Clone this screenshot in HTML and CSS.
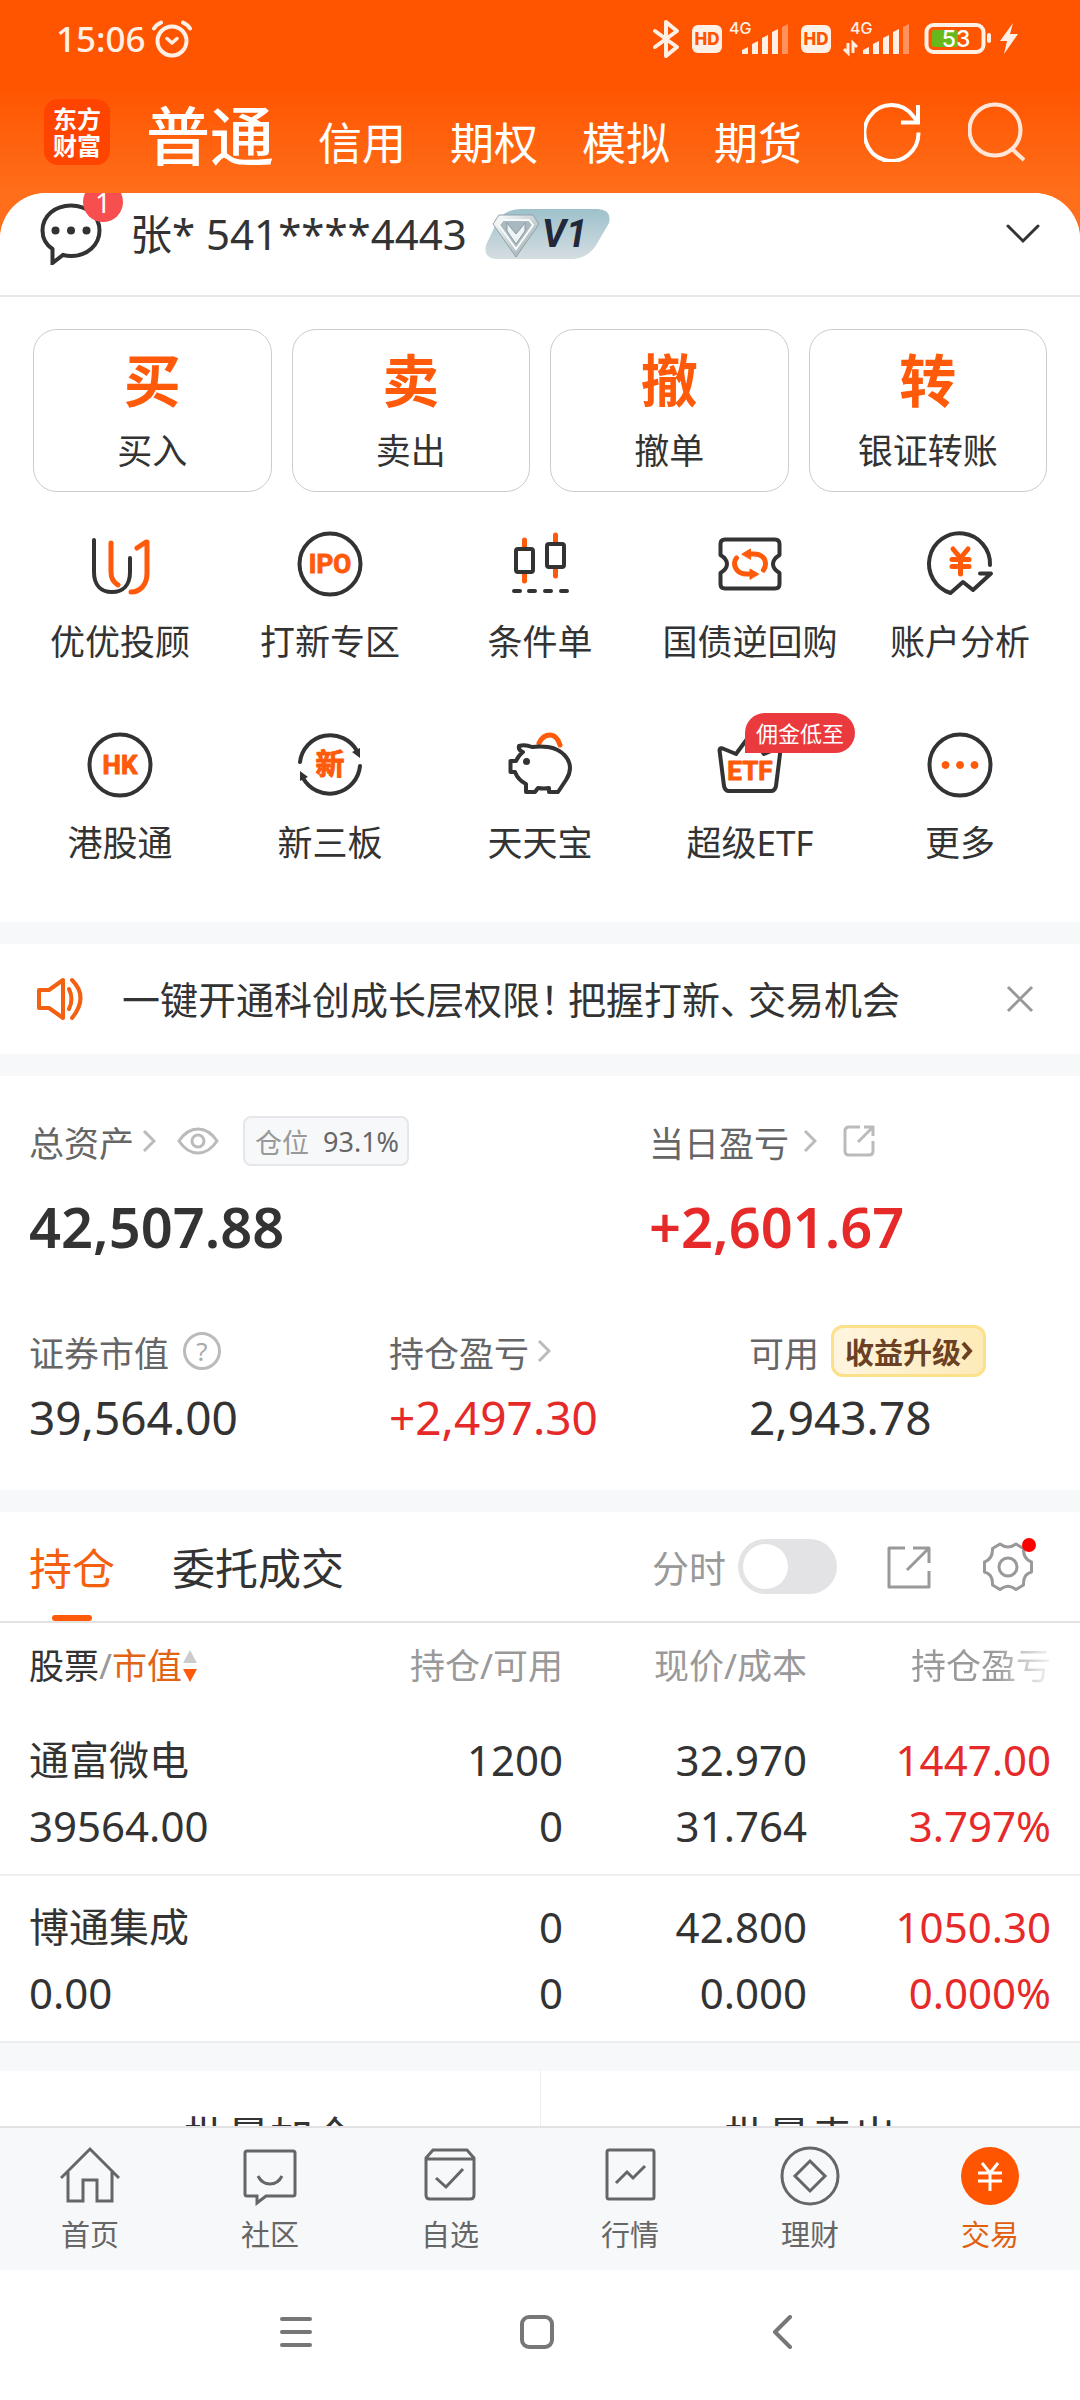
FILE: index.html
```html
<!DOCTYPE html>
<html lang="zh-CN">
<head>
<meta charset="utf-8">
<meta name="viewport" content="width=device-width, initial-scale=1">
<title>交易</title>
<link rel="stylesheet" href="styles.css">
</head>
<body>
<div class="app">
  <header class="top">
    <div class="status">
      <div class="status-left">
        <span class="clock">15:06</span>
        <svg width="40" height="38" viewBox="0 0 40 38" fill="none" stroke="#fff0e6" stroke-width="4" stroke-linecap="round"><circle cx="20" cy="21" r="14.500"/><path d="M2 8.500Q4 5 9 2.500M31 2.500Q36 5 38 8.500"/><path d="M15 18.500L20 23L25 18.500" stroke-linejoin="round" stroke-width="3.500"/></svg>
      </div>
      <svg class="status-right" width="366" height="40" viewBox="0 0 366 40">
        <path d="M3 12L25 28L14 37V3L25 12L3 28" fill="none" stroke="#fff0e6" stroke-width="4" stroke-linejoin="round" stroke-linecap="round"/>
        <rect x="40" y="6" width="30" height="28" rx="6" fill="#fff0e6"/><text class="hd" x="55" y="26" text-anchor="middle">HD</text>
        <text class="net" x="77" y="15">4G</text>
        <g fill="#fff0e6"><path d="M90 35V31L96 28V35ZM100 35V25L106 22V35ZM110 35V19L116 16V35ZM120 35V13L126 10V35Z"/><path d="M130 35V8L136 5V35Z" opacity=".4"/></g>
        <rect x="149" y="6" width="30" height="28" rx="6" fill="#fff0e6"/><text class="hd" x="164" y="26" text-anchor="middle">HD</text>
        <text class="net" x="198" y="15">4G</text>
        <path d="M196 24V34L192 30M201 34V24L205 28" fill="none" stroke="#fff0e6" stroke-width="3"/>
        <g fill="#fff0e6"><path d="M211 35V31L217 28V35ZM221 35V25L227 22V35ZM231 35V19L237 16V35ZM241 35V13L247 10V35Z"/><path d="M251 35V8L257 5V35Z" opacity=".4"/></g>
        <rect x="274.500" y="6" width="57" height="27" rx="7" fill="none" stroke="#fff0e6" stroke-width="4"/>
        <rect x="280" y="11" width="26" height="17" rx="2" fill="#67b81c"/><rect x="335" y="14" width="4" height="10" rx="2" fill="#fff0e6"/>
        <text class="batt" x="304" y="28" text-anchor="middle">53</text>
        <path d="M361 4L348 22H355L352 35L366 15H358Z" fill="#fff0e6"/>
      </svg>
    </div>
    <nav class="modes">
      <a class="logo" href="#">东方<br>财富</a>
      <div class="mode-list">
        <a class="mode mode-on" href="#">普通</a>
        <a class="mode" href="#">信用</a>
        <a class="mode" href="#">期权</a>
        <a class="mode" href="#">模拟</a>
        <a class="mode" href="#">期货</a>
      </div>
      <div class="tools">
        <button class="icon-btn" aria-label="刷新"><svg width="58" height="60" viewBox="0 0 58 60" fill="none" stroke="#fff" stroke-width="4"><path d="M54.500 30.500A27 28 0 1 1 49 14L54 20"/><path d="M54 3V20.500H37"/></svg></button>
        <button class="icon-btn" aria-label="搜索"><svg width="58" height="60" viewBox="0 0 58 60" fill="none" stroke="#ffe6d8" stroke-width="4"><circle cx="27" cy="28" r="25.500"/><path d="M43 46L56 58"/></svg></button>
      </div>
    </nav>
  </header>

  <main class="sheet">
    <section class="account">
      <button class="icon-btn msg" aria-label="消息">
        <svg width="62" height="62" viewBox="0 0 62 62"><path d="M31 2.500C47 2.500 59.500 13 59.500 27.500S47 53 31 53Q27 53 23 52L12.500 60V46C5 41 2.500 34 2.500 27.500C2.500 13 15 2.500 31 2.500Z" fill="none" stroke="#333" stroke-width="4"/><circle cx="15.500" cy="27.500" r="4" fill="#333"/><circle cx="31" cy="27.500" r="4" fill="#333"/><circle cx="46.500" cy="27.500" r="4" fill="#333"/></svg>
        <span class="badge">1</span>
      </button>
      <span class="acct-name">张* 541****4443</span>
      <svg class="level" width="126" height="50" viewBox="0 0 126 50">
        <defs><linearGradient id="lv" x1="0" y1="0" x2="0" y2="1"><stop offset="0" stop-color="#9dc1cb"/><stop offset="1" stop-color="#d5dde1"/></linearGradient><linearGradient id="gem" x1="0" y1="0" x2="1" y2="1"><stop offset="0" stop-color="#fff"/><stop offset="1" stop-color="#94a5ab"/></linearGradient></defs>
        <path d="M36 0H113Q127 1 124 14L113 33Q104 50 86 50H11Q-2 49 1 36L10 17Q17 0 36 0Z" fill="url(#lv)"/>
        <path d="M14 6H48L54 15L31 48L8 15Z" fill="url(#gem)" stroke="#8fa1a7" stroke-width="1"/><path d="M18 11H44L48 16L31 40L14 16Z" fill="#aab9bf" stroke="#f6fafb" stroke-width="2"/><path d="M22 14L31 25L40 14V22L31 35L22 22Z" fill="#eef3f5" stroke="#8c9ba0" stroke-width="1"/>
        <text x="57" y="38">V1</text>
      </svg>
      <button class="icon-btn expand" aria-label="展开"><svg width="34" height="20" viewBox="0 0 34 20" fill="none" stroke="#333" stroke-width="3" stroke-linecap="round"><path d="M2 2L17 17L32 2"/></svg></button>
    </section>

    <section class="cards">
      <button class="card"><b>买</b><span>买入</span></button>
      <button class="card"><b>卖</b><span>卖出</span></button>
      <button class="card"><b>撤</b><span>撤单</span></button>
      <button class="card"><b>转</b><span>银证转账</span></button>
    </section>

    <section class="grid">
      <a class="cell" href="#"><span class="ico"><svg viewBox="0 0 64 64"><path d="M6 8V40C6 53 13 60 24 60S42 53 42 40V26"/><path class="o" d="M23 11V40Q23 49 30 53M49 16L58 10H59V41C59 53 52 60 43 60"/></svg></span>优优投顾</a>
      <a class="cell" href="#"><span class="ico"><svg viewBox="0 0 64 64"><circle cx="32" cy="32" r="30.500"/><text class="t" x="32" y="41">IPO</text></svg></span>打新专区</a>
      <a class="cell" href="#"><span class="ico"><svg viewBox="0 0 64 64"><path class="o" d="M16.500 8V16M16.500 41V49M47.500 3V11M47.500 36V44"/><rect x="8" y="17" width="17" height="23" rx="2"/><rect x="39" y="12" width="17" height="23" rx="2"/><path d="M6 59H12M21 59H27M37 59H43M53 59H59"/></svg></span>条件单</a>
      <a class="cell" href="#"><span class="ico"><svg viewBox="0 0 64 64"><path d="M7 7.500H57Q61.500 7.500 61.500 12V23Q55 27 55 32T61.500 41V52Q61.500 56.500 57 56.500H7Q2.500 56.500 2.500 52V41Q9 37 9 32T2.500 23V12Q2.500 7.500 7 7.500Z"/><path class="o" d="M31 22H36C44 22 47.500 27 47.500 32Q47.500 35 45.500 38M33 42H28C20 42 16.500 36 16.500 31Q16.500 28 18.500 26"/><path class="of" d="M24 22L32.500 17V27ZM40.500 42L32 37V47Z"/></svg></span>国债逆回购</a>
      <a class="cell" href="#"><span class="ico"><svg viewBox="0 0 64 64"><path d="M62 33A30.500 30.500 0 1 0 22.500 61L35 50L45 58L63 41.500H52"/><path class="o" d="M25 17L32.500 26L40 17M32.500 26V42M24 27.500H41M24 34.500H41"/></svg></span>账户分析</a>
      <a class="cell" href="#"><span class="ico"><svg viewBox="0 0 64 64"><circle cx="32" cy="32" r="30.500"/><text class="t" x="32" y="41">HK</text></svg></span>港股通</a>
      <a class="cell" href="#"><span class="ico"><svg viewBox="0 0 64 64"><path d="M2 29A30.500 30.500 0 0 1 59 18M62 33A30.500 30.500 0 0 1 5 45"/><path class="df" d="M62 25L54 19L62 15ZM2 38L10 44L2 48Z"/><text class="t zh" x="32" y="42">新</text></svg></span>新三板</a>
      <a class="cell" href="#"><span class="ico"><svg viewBox="0 0 64 64"><path class="o" d="M31 10Q35 2 42 2T52 12"/><path d="M11 13Q17 11 24 14Q32 13 40 14C54 16 62 26 62 35Q62 41 58 47L50 59H41V55Q36 56 30 55L27 59H18V51Q10 47 7 39H2.500V28H8Q10 23 15 19Q10 17 11 13Z"/><circle class="df" cx="18.500" cy="28.500" r="3.500"/></svg></span>天天宝</a>
      <a class="cell" href="#"><span class="ico"><svg viewBox="0 0 64 64"><path d="M1.500 17Q2 14 6 16L18 21L32 2L46 21L58 16Q62 14 62.500 17L58 53Q57 58 53 58H11Q7 58 6 53Z"/><text class="t" x="32" y="47">ETF</text></svg><em class="tag">佣金低至</em></span>超级ETF</a>
      <a class="cell" href="#"><span class="ico"><svg viewBox="0 0 64 64"><circle cx="32" cy="32" r="30.500"/><path class="of" d="M14 32a3.500 3.500 0 1 0 7 0a3.500 3.500 0 1 0-7 0M28.500 32a3.500 3.500 0 1 0 7 0a3.500 3.500 0 1 0-7 0M43 32a3.500 3.500 0 1 0 7 0a3.500 3.500 0 1 0-7 0"/></svg></span>更多</a>
    </section>

    <section class="notice">
      <svg width="50" height="44" viewBox="0 0 50 44" fill="none" stroke="#f26112" stroke-width="4" stroke-linejoin="round"><path d="M3 13H13L27 3V41L13 31H3Z"/><path d="M33 12Q38 22 33 32M36 3Q53 20 36 41" stroke-linecap="round"/></svg>
      <p><span>一键开通科创成长层权限！</span><span>把握打新、</span><span>交易机会</span></p>
      <button class="icon-btn" aria-label="关闭"><svg width="28" height="28" viewBox="0 0 28 28" stroke="#999" stroke-width="3"><path d="M2 2L26 26M26 2L2 26"/></svg></button>
    </section>

    <section class="assets">
      <div class="row-main">
        <div>
          <div class="label">总资产<svg class="chev" viewBox="0 0 14 22"><path d="M2 1L12 11L2 21"/></svg>
            <button class="icon-btn eye" aria-label="显示金额"><svg width="42" height="28" viewBox="0 0 42 28" fill="none" stroke="#bbb" stroke-width="3"><path d="M2 14Q10 2 21 2T40 14Q32 26 21 26T2 14Z"/><circle cx="21" cy="14" r="6"/></svg></button>
            <span class="pos"><span>仓位</span><span class="pct">93.1%</span></span></div>
          <div class="big">42,507.88</div>
        </div>
        <div>
          <div class="label">当日盈亏<svg class="chev wide" viewBox="0 0 14 22"><path d="M2 1L12 11L2 21"/></svg>
            <button class="icon-btn share" aria-label="分享盈亏"><svg width="32" height="32" viewBox="0 0 32 32" fill="none" stroke="#bbb" stroke-width="3"><path d="M17 2H6Q2 2 2 6V26Q2 30 6 30H26Q30 30 30 26V16M21 2H30V11M30 2L15 17"/></svg></button></div>
          <div class="big up">+2,601.67</div>
        </div>
      </div>
      <div class="row-sub">
        <div><div class="label">证券市值<button class="icon-btn help" aria-label="说明">?</button></div><div class="mid">39,564.00</div></div>
        <div><div class="label">持仓盈亏<svg class="chev" viewBox="0 0 14 22"><path d="M2 1L12 11L2 21"/></svg></div><div class="mid up">+2,497.30</div></div>
        <div><div class="label">可用<button class="upgrade">收益升级<svg width="12" height="20" viewBox="0 0 12 20" fill="none" stroke="#6b4023" stroke-width="4"><path d="M2 2L9 10L2 18"/></svg></button></div><div class="mid">2,943.78</div></div>
      </div>
    </section>

    <section class="holdings">
      <div class="tabs">
        <button class="tab tab-on">持仓</button>
        <button class="tab">委托成交</button>
        <label class="switch">分时<input type="checkbox"></label>
        <button class="icon-btn" aria-label="分享"><svg width="44" height="44" viewBox="0 0 44 44" fill="none" stroke="#999" stroke-width="3" stroke-linejoin="round"><path d="M18 3H2V42H42V26M26 3H42V18M42 3L20 25"/></svg></button>
        <button class="icon-btn gear" aria-label="设置"><svg width="50" height="50" viewBox="0 0 50 50" fill="none" stroke="#999" stroke-width="3" stroke-linejoin="round"><path d="M17 2Q25 8 33 2L40.500 6.500Q40 17 48.500 20V30Q40 32 40.500 43L33 47.500Q25 41 17 47.500L9.500 43Q10 32 1.500 30V20Q10 17 9.500 6.500Z"/><circle cx="25" cy="25" r="9"/></svg></button>
      </div>
      <table>
        <thead><tr>
          <th><span class="dark">股票</span>/<span class="hot">市值</span><svg class="sort" width="16" height="34" viewBox="0 0 16 34"><path d="M8 1L15 14H1Z" fill="#ccc"/><path d="M8 33L15 20H1Z" fill="#ff5a0a"/></svg></th>
          <th>持仓/可用</th><th>现价/成本</th><th><span class="fade">持仓盈亏</span></th>
        </tr></thead>
        <tbody>
          <tr><td><span class="name">通富微电</span><br>39564.00</td><td>1200<br>0</td><td>32.970<br>31.764</td><td class="up">1447.00<br>3.797%</td></tr>
          <tr><td><span class="name">博通集成</span><br>0.00</td><td>0<br>0</td><td>42.800<br>0.000</td><td class="up">1050.30<br>0.000%</td></tr>
        </tbody>
      </table>
    </section>

    <section class="batch">
      <button>批量加仓</button><button>批量卖出</button>
    </section>
  </main>

  <nav class="bottom">
    <a href="#"><svg viewBox="0 0 60 60"><path d="M1 32L30 3L59 32M8 26V55H23V34H37V55H52V26"/></svg>首页</a>
    <a href="#"><svg viewBox="0 0 60 60"><path d="M7 5H53Q55 5 55 7V48Q55 50 53 50H26L17 57V50H7Q5 50 5 48V7Q5 5 7 5Z"/><path d="M18 30Q22 38 30 38T42 30"/></svg>社区</a>
    <a href="#"><svg viewBox="0 0 60 60"><path d="M6 12L13 4H47L54 12V49Q54 53 50 53H10Q6 53 6 49ZM6 13H54M16 32L26 41L43 23"/></svg>自选</a>
    <a href="#"><svg viewBox="0 0 60 60"><rect x="7" y="4" width="47" height="49" rx="2"/><path d="M16 37L27 26L33 32L45 20"/></svg>行情</a>
    <a href="#"><svg viewBox="0 0 60 60"><circle cx="30" cy="30" r="28"/><path d="M30 15L45 30L30 45L15 30Z"/></svg>理财</a>
    <a class="on" href="#"><svg viewBox="0 0 60 60"><circle class="disc" cx="30" cy="30" r="29"/><path d="M22 17L30 27L38 17M30 27V45M18 27H42M18 35H42"/></svg>交易</a>
  </nav>
  <div class="sysnav">
    <button class="icon-btn" aria-label="最近任务"><svg width="32" height="32" viewBox="0 0 32 32"><path d="M2 3H30M2 16H30M2 29H30"/></svg></button>
    <button class="icon-btn" aria-label="主屏幕"><svg width="34" height="34" viewBox="0 0 34 34"><rect x="2" y="2" width="30" height="30" rx="7"/></svg></button>
    <button class="icon-btn" aria-label="返回"><svg width="20" height="34" viewBox="0 0 20 34"><path d="M18 2L3 17L18 32"/></svg></button>
  </div>
</div>
</body>
</html>
```
FILE: styles.css
```css
* { box-sizing: border-box; }

body {
  margin: 0;
  font-family: "Noto Sans", "Noto Sans CJK SC", sans-serif;
  color: #333;
  background: #fff;
}

a { color: inherit; text-decoration: none; }

button {
  margin: 0;
  padding: 0;
  border: 0;
  background: none;
  font: inherit;
  color: inherit;
}

svg { display: block; flex: none; }
p { margin: 0; }
.icon-btn { display: block; flex: none; position: relative; }
.up { color: #e62a2a; }

.app {
  display: flex;
  flex-direction: column;
  height: 100vh;
  background: linear-gradient(#ff5400 84px, #ff6e1a 192px, #ff6e1a 260px, #fff 260px);
}

/* Header */
.status {
  display: flex;
  justify-content: space-between;
  padding: 19px 62px 0 56px;
  height: 80px;
}
.status-left { display: flex; gap: 6px; height: 40px; align-items: center; }
.clock { font-size: 35px; line-height: 40px; font-weight: 500; color: #fff0e6; }
.status-right { font-family: Inter, sans-serif; }
.hd { font-size: 17px; font-weight: 800; fill: #ff5400; }
.net { font-size: 16px; font-weight: 500; fill: #fff0e6; }
.batt { font-size: 23px; font-weight: 500; fill: #fff; }

.modes { display: flex; align-items: center; height: 113px; padding: 0 54px 10px 44px; }
.logo {
  width: 66px;
  height: 66px;
  padding-top: 6px;
  border-radius: 14px;
  background: #ff4400;
  color: #fff;
  font-size: 24px;
  line-height: 27px;
  font-weight: 700;
  text-align: center;
}
.mode-list { display: flex; align-items: baseline; gap: 44px; margin-left: 36px; padding-top: 15px; color: #fff; }
.mode { font-size: 44px; line-height: 80px; }
.mode-on { font-size: 64px; font-weight: 500; }
.tools { display: flex; gap: 46px; margin-left: auto; }

/* Content sheet */
.sheet {
  flex: 1;
  min-height: 0;
  overflow: hidden;
  border-radius: 46px 46px 0 0;
  background: #fff;
}
.sheet > section { background: #fff; }

.account {
  display: flex;
  align-items: center;
  height: 104px;
  padding: 0 40px 20px;
  border-bottom: 2px solid #e8e8e8;
}
.badge {
  position: absolute;
  left: 43px;
  top: -21px;
  width: 40px;
  height: 40px;
  border-radius: 50%;
  background: #f74f50;
  color: #fff;
  font-size: 28px;
  line-height: 40px;
  text-align: center;
}
.acct-name { margin-left: 28px; font-size: 42px; line-height: 60px; }
.level { margin-left: 18px; }
.level text { font: italic 700 38px Roboto, sans-serif; fill: #22273a; }
.expand { margin-left: auto; }

.cards {
  display: grid;
  grid-template-columns: repeat(4, 1fr);
  gap: 20px;
  padding: 32px 33px 0;
}
.card {
  display: flex;
  flex-direction: column;
  align-items: center;
  gap: 10px;
  height: 163px;
  padding-top: 14px;
  border: 1px solid #ccc;
  border-radius: 24px;
  font-size: 35px;
  line-height: 50px;
}
.card b { font-size: 57px; line-height: 72px; font-weight: 700; color: #ff5a0a; }

.grid {
  display: grid;
  grid-template-columns: repeat(5, 1fr);
  row-gap: 66px;
  padding: 40px 15px 54px;
}
.cell {
  display: flex;
  flex-direction: column;
  align-items: center;
  gap: 21px;
  font-size: 35px;
  line-height: 50px;
}
.ico { position: relative; width: 64px; height: 64px; }
.ico svg {
  width: 64px;
  height: 64px;
  overflow: visible;
  fill: none;
  stroke: #333;
  stroke-width: 4;
  stroke-linecap: round;
  stroke-linejoin: round;
}
.ico .o { stroke: #ff5a0a; stroke-width: 5; }
.ico .of { fill: #ff5a0a; stroke: #ff5a0a; stroke-width: 1; }
.ico .df { fill: #333; stroke: none; }
.ico .t {
  font: 700 26px Roboto, "Noto Sans CJK SC", sans-serif;
  fill: #ff5a0a;
  stroke: #ff5a0a;
  stroke-width: 1;
  text-anchor: middle;
}
.ico .zh { font-size: 29px; }
.tag {
  position: absolute;
  left: 27px;
  top: -20px;
  padding: 0 11px;
  border-radius: 20px 20px 20px 0;
  background: #ea3a3d;
  color: #fff;
  font-size: 22px;
  line-height: 40px;
  font-style: normal;
  white-space: nowrap;
}

.notice {
  display: flex;
  align-items: center;
  height: 154px;
  padding: 0 46px 0 36px;
  border: solid #f7f8fa;
  border-width: 22px 0;
}
.notice p {
  display: flex;
  gap: 9px;
  margin-left: 36px;
  font-size: 38px;
  line-height: 56px;
  font-feature-settings: "palt";
}
.notice button { margin-left: auto; }

/* Assets */
.assets { padding: 35px 30px 43px 29px; }
.label { display: flex; align-items: center; height: 60px; font-size: 35px; color: #666; }
.chev { width: 14px; height: 22px; margin-left: 8px; fill: none; stroke: #bbb; stroke-width: 3; }
.chev.wide { margin-left: 14px; }
.eye { margin-left: 21px; }
.share { margin-left: 26px; }
.row-main { display: grid; grid-template-columns: 620px 1fr; }
.row-sub { display: grid; grid-template-columns: 360px 360px 1fr; margin-top: 60px; }
.pos {
  display: flex;
  align-items: center;
  gap: 14px;
  height: 50px;
  margin-left: 24px;
  padding: 0 8px 0 10px;
  border: 2px solid #e6e7ea;
  border-radius: 8px;
  background: #f7f8fa;
  font-size: 27px;
  color: #999;
}
.pct { color: #666; }
.big { margin-top: 20px; font-size: 56px; line-height: 70px; font-weight: 600; }
.mid { margin-top: 6px; font-size: 46px; line-height: 60px; }
.help {
  width: 38px;
  height: 38px;
  margin-left: 14px;
  border: 3px solid #bbb;
  border-radius: 50%;
  font-size: 26px;
  line-height: 32px;
  color: #aaa;
}
.upgrade {
  display: flex;
  align-items: center;
  height: 52px;
  margin-left: 12px;
  padding: 0 10px 0 11px;
  border: 3px solid #fce08a;
  border-radius: 12px;
  background: linear-gradient(90deg, #fff5e0, #fdeab8);
  color: #6b4023;
  font-size: 29px;
  font-weight: 700;
}

/* Holdings */
.holdings { border-top: 22px solid #f7f8fa; }
.tabs {
  display: flex;
  align-items: center;
  height: 111px;
  padding: 0 47px 0 29px;
  border-bottom: 2px solid #e2e2e2;
}
.tab { position: relative; height: 109px; font-size: 43px; }
.tab + .tab { margin-left: 57px; }
.tab-on { color: #f5600f; }
.tab-on::after {
  content: "";
  position: absolute;
  left: 50%;
  bottom: 0;
  width: 40px;
  height: 6px;
  margin-left: -20px;
  border-radius: 3px;
  background: #ff5a0a;
}
.switch { display: flex; align-items: center; gap: 12px; margin: 0 50px 0 auto; font-size: 37px; color: #999; }
.switch input {
  appearance: none;
  display: block;
  width: 99px;
  height: 55px;
  margin: 0;
  padding: 5px;
  border-radius: 28px;
  background: #e3e3e6;
}
.switch input::before {
  content: "";
  display: block;
  width: 45px;
  height: 45px;
  border-radius: 50%;
  background: #fff;
}
.switch input:checked { background: #ff5a0a; }
.switch input:checked::before { margin-left: 44px; }
.gear { margin-left: 52px; }
.gear::after {
  content: "";
  position: absolute;
  right: -3px;
  top: -4px;
  width: 14px;
  height: 14px;
  border-radius: 50%;
  background: #f00;
}

table { width: 100%; border-collapse: collapse; table-layout: fixed; }
th, td { padding: 0; text-align: right; font-weight: 400; width: 244px; }
th:first-child, td:first-child { width: auto; padding-left: 29px; text-align: left; }
th:last-child, td:last-child { width: 273px; padding-right: 29px; }
th { height: 86px; font-size: 35px; line-height: 50px; color: #999; }
td { padding: 17px 0 15px; font-size: 42px; line-height: 66px; border-bottom: 2px solid #eee; }
.name { font-size: 40px; }
.dark { color: #333; }
.hot { color: #e06414; }
.sort { display: inline-block; vertical-align: -4px; }
.fade {
  background: linear-gradient(90deg, #999 60%, #f4f4f4);
  background-clip: text;
  color: transparent;
}

.batch {
  display: grid;
  grid-template-columns: 1fr 1fr;
  border-top: 28px solid #f7f8fa;
}
.batch button { height: 126px; font-size: 43px; }
.batch button + button { border-left: 1px solid #eee; }

/* Bottom bars */
.bottom {
  display: grid;
  grid-template-columns: repeat(6, 1fr);
  height: 144px;
  padding-top: 18px;
  border-top: 2px solid #e2e2e4;
  background: #f7f8fa;
  color: #666;
  font-size: 29px;
  line-height: 40px;
}
.bottom a { display: flex; flex-direction: column; align-items: center; gap: 9px; }
.bottom svg { width: 60px; height: 60px; fill: none; stroke: #666; stroke-width: 3; }
.bottom .on { color: #e0600f; }
.bottom .on svg { stroke: #fff; }
.bottom .disc { fill: #ff5400; stroke: none; }

.sysnav {
  display: grid;
  grid-template-columns: 1fr 32px 208px 34px 218px 20px 1fr;
  align-items: center;
  height: 130px;
  padding: 0 8px 6px 0;
  background: #fff;
}
.sysnav button:nth-child(1) { grid-column: 2; }
.sysnav button:nth-child(2) { grid-column: 4; }
.sysnav button:nth-child(3) { grid-column: 6; }
.sysnav svg { fill: none; stroke: #777; stroke-width: 4; stroke-linecap: round; stroke-linejoin: round; }
```
